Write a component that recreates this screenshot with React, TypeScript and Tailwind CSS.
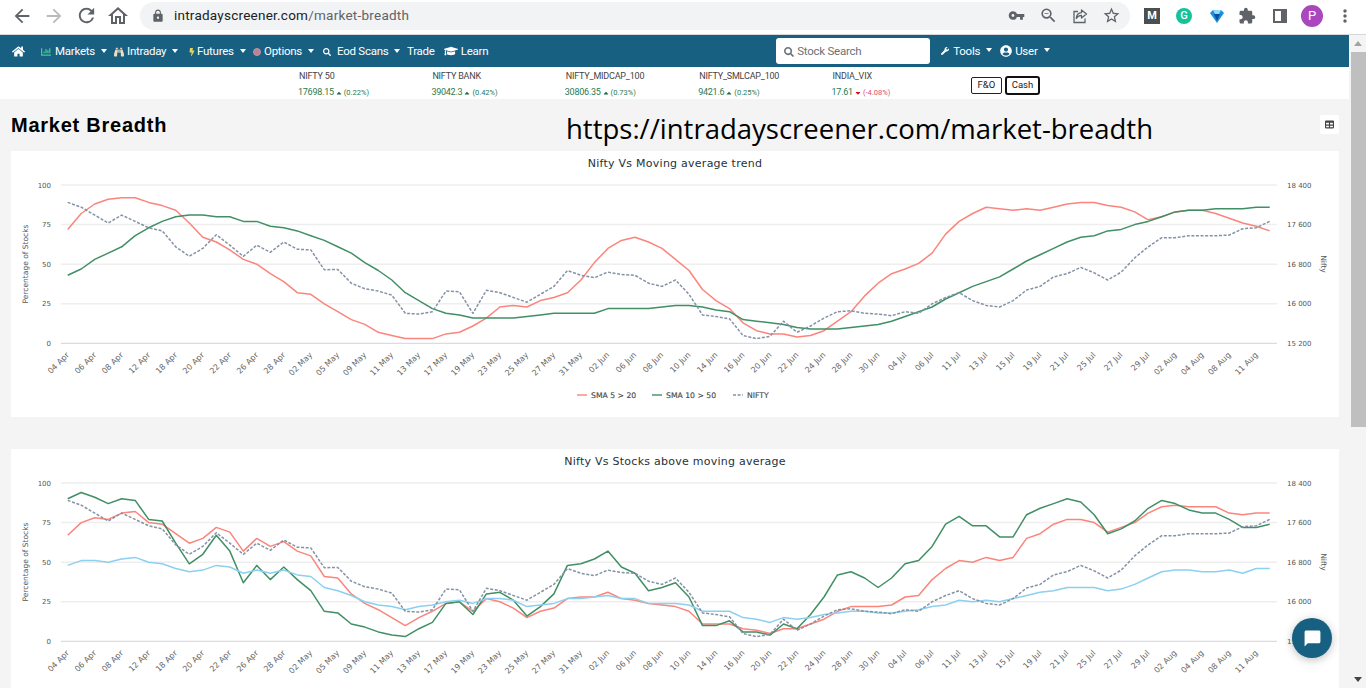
import {
  FaBinoculars,
  FaBolt,
  FaCaretDown,
  FaCaretUp,
  FaChartBar,
  FaGraduationCap,
  FaHome,
  FaSearch,
  FaTable,
  FaUserCircle,
  FaWrench,
} from "react-icons/fa";
import {
  MdArrowBack,
  MdArrowForward,
  MdChatBubble,
  MdExtension,
  MdLock,
  MdMoreVert,
  MdOutlineHome,
  MdRefresh,
  MdStarBorder,
  MdVpnKey,
  MdZoomOut,
} from "react-icons/md";

const DATES = "04 Apr,06 Apr,08 Apr,12 Apr,18 Apr,20 Apr,22 Apr,26 Apr,28 Apr,02 May,05 May,09 May,11 May,13 May,17 May,19 May,23 May,25 May,27 May,31 May,02 Jun,06 Jun,08 Jun,10 Jun,14 Jun,16 Jun,20 Jun,22 Jun,24 Jun,28 Jun,30 Jun,04 Jul,06 Jul,11 Jul,13 Jul,15 Jul,19 Jul,21 Jul,25 Jul,27 Jul,29 Jul,02 Aug,04 Aug,08 Aug,11 Aug".split(",");

const NIFTY = [89, 86, 81, 76, 81, 77, 73, 71, 61, 55, 60, 68.6, 62, 55, 62, 57.5, 64, 59.5, 59, 46.5, 46.7, 38, 34.5, 33, 30.5, 19, 18.5, 20, 33, 32.6, 19, 33.5, 32, 29, 26, 31, 36, 46, 43, 41.5, 45, 43.5, 43, 38, 36, 40, 31, 18, 17, 15.5, 5, 3, 4.5, 14, 7, 11, 16, 20, 20.6, 19, 18.5, 17.5, 20, 19, 25, 29, 32, 27, 24, 23, 27, 33.7, 36, 42, 44, 48, 44.6, 40, 45, 54, 61, 66.7, 66.7, 68, 68, 68, 68.4, 72.4, 73, 77];
const SMA_5_20 = [72, 82, 88, 91, 92, 92, 89, 87, 84, 76, 67, 64, 59, 53, 50, 44, 39, 32, 31, 25, 20, 15, 12, 7, 5, 3, 3, 3, 6, 7, 11, 16, 23, 24, 23, 27, 29, 32, 40, 51, 60, 65, 67, 64, 60, 53, 46, 34, 27, 22, 13, 8, 6, 6, 4, 5, 8, 14, 20, 30, 38, 44, 47, 50.5, 57, 69, 77, 82, 86, 85, 84, 85, 84, 86, 88, 89, 89, 87, 86, 83, 78, 80, 83, 84, 84, 82, 79, 76, 74, 71];
const SMA_10_50 = [43, 47, 53, 57, 61, 68, 73, 77, 80, 81, 81, 80, 80, 77, 77, 74, 73, 71, 68, 65, 61, 57, 51, 46, 40, 32, 27, 22, 19, 18, 16, 16, 16, 16, 17, 18, 19, 19, 19, 19, 22, 22, 22, 22, 23, 24, 24, 23, 21, 20, 15, 14, 13, 12, 10, 9, 9, 9, 10, 11, 12, 14, 17, 20, 23, 28, 32, 36, 39, 42, 47, 52, 56, 60, 64, 67, 68, 71, 72, 75, 77, 80, 83, 84, 84, 85, 85, 85, 86, 86];
const ABOVE_GREEN = [90, 94, 91, 87, 90, 89, 77, 76, 62, 49, 55, 67, 57, 37, 48, 39, 47, 39, 32, 19, 18, 11, 9, 6, 4, 3, 8, 12, 24, 25, 17, 30, 31, 26, 16, 22, 30, 48, 49, 52, 57, 47, 43, 32, 34, 37, 28, 10, 10, 13, 6, 6, 4, 11, 8, 17, 28, 42, 44, 40, 34, 40, 49, 51, 60, 74, 79, 73, 73, 66, 66, 80, 84, 87, 90, 88, 80, 68, 71, 76, 84, 89, 87, 83, 81, 81, 77, 72, 72, 74];
const ABOVE_RED = [67, 75, 78, 77, 81, 82, 75, 74, 68, 62, 65, 72, 69, 57, 65, 60, 63, 57, 54, 41, 40, 30, 24, 20, 15, 10, 15, 19, 24, 25, 19, 27, 25, 21, 15, 19, 21, 27, 28, 28, 31, 27, 26, 24, 23, 22, 19, 11, 11, 11, 8, 7, 5, 8, 8, 11, 14, 19, 22, 22, 22, 23, 28, 29, 39, 46, 51, 50, 53, 51, 53, 65, 68, 74, 77, 77, 75, 69, 72, 75, 81, 85, 86, 85, 85, 85, 81, 80, 81, 81];
const ABOVE_BLUE = [48, 51, 51, 50, 52, 53, 50, 49, 46, 44, 45, 48, 47, 43, 45, 43, 45, 42, 41, 34, 32, 29, 25, 23, 22, 20, 22, 23, 25, 26, 24, 27, 27, 26, 22, 23, 24, 27, 27, 28, 29, 27, 27, 24, 24, 24, 23, 19, 19, 19, 15, 14, 12, 15, 14, 15, 17, 18, 19, 19, 18, 18, 19, 20, 22, 23, 26, 25, 26, 25, 27, 29, 31, 32, 34, 34, 34, 32, 33, 36, 40, 44, 45, 45, 44, 44, 45, 43, 46, 46];

const RED = "#fb857c";
const GREEN = "#408f65";
const GREY = "#8492a6";
const BLUE = "#8bd0f0";

type Series = { name: string; data: number[]; color: string; dashed?: boolean; legend?: boolean };

const axisX = (i: number) => 56.7 + i * 13.506;
const axisY = (v: number) => 168.4 - v * 1.584;

function Chart({ title, series }: { title: string; series: Series[] }) {
  let legendX = 566;
  return (
    <div className="ml-[11px] mr-[10px] h-[266px] bg-white">
      <div className="flex h-[24px] items-center justify-center pt-[2px] text-[11px] tracking-[0.25px] text-[#263238] [font-family:'DejaVu_Sans',sans-serif]">
        {title}
      </div>
      <svg width="1328" height="242" className="block" fontFamily="'DejaVu Sans', sans-serif">
        {[100, 75, 50, 25].map((v) => (
          <line key={v} x1="50" x2="1266" y1={axisY(v)} y2={axisY(v)} stroke="#eeeeee" strokeWidth="1.5" />
        ))}
        <line x1="50" x2="1266" y1={axisY(0)} y2={axisY(0)} stroke="#d9dbe6" strokeWidth="1.3" />
        {[100, 75, 50, 25, 0].map((v) => (
          <text key={v} x="40" y={axisY(v) + 2.5} textAnchor="end" fontSize="7" fill="#555">
            {v}
          </text>
        ))}
        {["18 400", "17 600", "16 800", "16 000", "15 200"].map((v, i) => (
          <text key={v} x="1276" y={axisY(100 - i * 25) + 2.5} fontSize="7" fill="#555">
            {v}
          </text>
        ))}
        <text transform="translate(17 89) rotate(-90)" textAnchor="middle" fontSize="7.5" fill="#555">
          Percentage of Stocks
        </text>
        <text transform="translate(1310 89) rotate(90)" textAnchor="middle" fontSize="7.5" fill="#555">
          Nifty
        </text>
        {DATES.map((d, i) => (
          <text
            key={d}
            transform={`translate(${axisX(i * 2) + 2} 180.5) rotate(-45)`}
            textAnchor="end"
            fontSize="8"
            fill="#666"
          >
            {d}
          </text>
        ))}
        {series.map((s) => (
          <polyline
            key={s.name}
            points={s.data.map((v, i) => `${axisX(i).toFixed(1)},${axisY(v).toFixed(1)}`).join(" ")}
            fill="none"
            stroke={s.color}
            strokeWidth="1.5"
            strokeLinejoin="round"
            strokeDasharray={s.dashed ? "3 1.6" : undefined}
          />
        ))}
        {series
          .filter((s) => s.legend)
          .map((s) => {
            const x = legendX;
            legendX += s.name.length * 6 + 15;
            return (
              <g key={s.name}>
                <line x1={x} x2={x + 10} y1="220" y2="220" stroke={s.color} strokeWidth="1.4" strokeDasharray={s.dashed ? "3 1.6" : undefined} />
                <text x={x + 14} y="223" fontSize="7.7" fontWeight="500" stroke="#555" strokeWidth="0.15" fill="#444">
                  {s.name}
                </text>
              </g>
            );
          })}
      </svg>
    </div>
  );
}

function Caret() {
  return <span className="ml-[6px] mt-[-2px] h-0 w-0 border-x-[3.5px] border-t-[4px] border-x-transparent border-t-white" />;
}

function ShareIcon() {
  return (
    <svg width="16" height="16" viewBox="0 0 16 16" fill="none" stroke="#5f6368" strokeWidth="1.3">
      <path d="M6 3.5H2v11h11v-4" />
      <path d="M9.5 2v2.6C6 4.8 4.5 7 4.3 10.5 5.8 8.2 7.3 7.4 9.5 7.4V10l5-4z" strokeLinejoin="round" />
    </svg>
  );
}

function BrowserBar() {
  return (
    <div className="flex h-[35px] items-center border-b border-[#d6d8da] bg-white pb-[3px] text-[#5f6368] [font-family:Roboto,sans-serif]">
      <div className="flex w-[140px] items-center pl-[11px]">
        <MdArrowBack size={22} />
        <MdArrowForward size={22} className="ml-[10px] text-[#b8babc]" />
        <MdRefresh size={23} className="ml-[10px]" />
        <MdOutlineHome size={24} className="ml-[8px]" />
      </div>
      <div className="flex h-[28px] w-[990px] items-center rounded-full bg-[#f1f3f4] pl-[11px]">
        <MdLock size={14} />
        <span className="ml-[9px] text-[13.5px] tracking-[0.24px] text-[#202124]">intradayscreener.com</span>
        <span className="text-[13.5px] tracking-[0.24px]">/market-breadth</span>
        <div className="ml-auto flex items-center pr-[9px]">
          <MdVpnKey size={17} />
          <MdZoomOut size={19} className="ml-[14px]" />
          <span className="ml-[14px]"><ShareIcon /></span>
          <MdStarBorder size={19} className="ml-[14px]" />
        </div>
      </div>
      <div className="flex flex-1 items-center">
        <span className="ml-[14px] flex h-[16px] w-[16px] items-center justify-center bg-[#4a5050] text-[11px] font-bold leading-none text-white">M</span>
        <span className="ml-[16px] flex h-[16px] w-[16px] items-center justify-center rounded-full bg-[#15c39a] text-[11px] font-medium leading-none text-white">G</span>
        <svg width="16" height="16" viewBox="0 0 16 16" className="ml-[17px]">
          <path d="M1 5l3-3h8l3 3-7 10z" fill="#1b8fe0" />
          <path d="M5 6h6l-3 7z" fill="#0b4f9c" />
          <path d="M4 2h8l-2 4H6z" fill="#8fdcff" />
        </svg>
        <MdExtension size={18} className="ml-[13px]" />
        <span className="ml-[17px] flex h-[14px] w-[14px] justify-end border-[2px] border-[#5f6368] bg-white">
          <span className="w-[4px] bg-[#5f6368]" />
        </span>
        <span className="ml-[14px] flex h-[22px] w-[22px] items-center justify-center rounded-full bg-[#ab47bc] text-[13px] text-white">P</span>
        <MdMoreVert size={20} className="ml-[12px]" />
      </div>
    </div>
  );
}

function Nav() {
  const items = [
    { label: "Markets", icon: <FaChartBar size={10} className="text-[#45c891]" />, w: "w-[73px]", gap: "ml-[4px]" },
    { label: "Intraday", icon: <FaBinoculars size={10} className="text-[#f1dcc0]" />, w: "w-[74px]", gap: "ml-[3px]" },
    { label: "Futures", icon: <FaBolt size={8} className="text-[#e7d45f]" />, w: "w-[65px]", gap: "ml-[1px]" },
    { label: "Options", icon: <span className="h-[8px] w-[8px] rounded-full border border-[#c98f9c] bg-[#b98595]" />, w: "w-[70px]", gap: "ml-[3px]" },
    { label: "Eod Scans", icon: <FaSearch size={8} className="text-white" />, w: "w-[84px]", gap: "ml-[6px]" },
  ];
  return (
    <div className="flex h-[32px] items-center bg-[#186082] text-[11.5px] tracking-[-0.25px] text-white [font-family:Roboto,sans-serif]">
      <FaHome size={13} className="ml-[12px] mr-[16px]" />
      {items.map((item) => (
        <span key={item.label} className={`flex items-center pt-[1px] ${item.w}`}>
          {item.icon}
          <span className={item.gap}>{item.label}</span>
          <Caret />
        </span>
      ))}
      <span className="pt-[1px]">Trade</span>
      <FaGraduationCap size={14} className="ml-[9px]" />
      <span className="ml-[3px] pt-[1px]">Learn</span>
      <div className="ml-[288px] flex h-[26px] w-[154px] items-center rounded-[3px] bg-white pl-[8px] pt-[1px] text-[#6b7178]">
        <FaSearch size={10} />
        <span className="ml-[3px]">Stock Search</span>
      </div>
      <FaWrench size={8} className="ml-[11px]" />
      <span className="ml-[4px] pt-[1px]">Tools</span>
      <Caret />
      <FaUserCircle size={12} className="ml-[8px]" />
      <span className="ml-[3px] pt-[1px]">User</span>
      <Caret />
    </div>
  );
}

function Ticker({ name, value, change, down }: { name: string; value: string; change: string; down?: boolean }) {
  return (
    <div className="w-[133.4px] [font-family:Roboto,sans-serif]">
      <div className="h-[18px] pl-[1px] text-[9px] leading-[16px] tracking-[-0.2px] text-[#444]">{name}</div>
      <div className="flex items-center text-[9px] tracking-[-0.25px] text-[#2c7a4f]">
        {value}
        {down ? <FaCaretDown size={8} className="ml-[1px] text-[#c8102e]" /> : <FaCaretUp size={8} className="ml-[1px] text-[#1f6b45]" />}
        <span className={`ml-[1px] text-[7.5px] tracking-normal ${down ? "text-[#d9506a]" : "text-[#2c7a4f]"}`}>{change}</span>
      </div>
    </div>
  );
}

export default function App() {
  const sma: Series[] = [
    { name: "SMA 5 > 20", data: SMA_5_20, color: RED, legend: true },
    { name: "SMA 10 > 50", data: SMA_10_50, color: GREEN, legend: true },
    { name: "NIFTY", data: NIFTY, color: GREY, dashed: true, legend: true },
  ];
  // second chart's legend sits below the fold
  const above: Series[] = [
    { name: "red", data: ABOVE_RED, color: RED },
    { name: "green", data: ABOVE_GREEN, color: GREEN },
    { name: "blue", data: ABOVE_BLUE, color: BLUE },
    { name: "nifty", data: NIFTY, color: GREY, dashed: true },
  ];

  return (
    <div className="relative h-[688px] w-[1366px] overflow-hidden bg-white">
      <BrowserBar />
      <div className="flex h-[653px]">
        <div className="h-full w-[1349px] overflow-hidden bg-[#f4f4f4]">
          <Nav />
          <div className="flex h-[32px] items-start bg-white pl-[298px] pt-[1px]">
            <Ticker name="NIFTY 50" value="17698.15" change="(0.22%)" />
            <Ticker name="NIFTY BANK" value="39042.3" change="(0.42%)" />
            <Ticker name="NIFTY_MIDCAP_100" value="30806.35" change="(0.73%)" />
            <Ticker name="NIFTY_SMLCAP_100" value="9421.6" change="(0.25%)" />
            <Ticker name="INDIA_VIX" value="17.61" change="(-4.08%)" down />
            <div className="ml-[6px] mt-[8px] flex items-center text-[9.5px] text-[#222] [font-family:Roboto,sans-serif]">
              <span className="flex h-[17px] w-[31px] items-center justify-center rounded-[2px] border border-[#222]">F&amp;O</span>
              <span className="ml-[3px] flex h-[19px] w-[35px] items-center justify-center rounded-[3px] border-2 border-[#111]">Cash</span>
            </div>
          </div>
          <div className="flex h-[52px] items-start">
            <h1 className="ml-[11px] mt-[13px] w-[555px] text-[20px] font-bold leading-[26px] tracking-[0.75px] text-black [font-family:'Liberation_Sans',sans-serif]">
              Market Breadth
            </h1>
            <span className="mt-[10px] text-[27.5px] leading-[40px] text-black [font-family:'Open_Sans',sans-serif]">
              https://intradayscreener.com/market-breadth
            </span>
            <span className="ml-auto mr-[10px] mt-[16px] flex h-[19px] w-[19px] items-center justify-center rounded-[2px] bg-white">
              <FaTable size={9} className="text-[#444]" />
            </span>
          </div>
          <Chart title="Nifty Vs Moving average trend" series={sma} />
          <div className="h-[32px]" />
          <Chart title="Nifty Vs Stocks above moving average" series={above} />
        </div>
        <div className="flex w-[17px] flex-col bg-[#f4f4f4]">
          <div className="flex h-[17px] items-center justify-center">
            <span className="h-0 w-0 border-x-[4px] border-b-[5px] border-x-transparent border-b-[#a3a3a3]" />
          </div>
          <div className="ml-[2px] h-[375px] bg-[#bfbfbf]" />
          <div className="flex-1" />
          <div className="flex h-[17px] items-center justify-center">
            <span className="h-0 w-0 border-x-[4px] border-t-[5px] border-x-transparent border-t-[#444]" />
          </div>
        </div>
      </div>
      <button className="absolute left-[1292px] top-[618px] flex h-[40px] w-[40px] items-center justify-center rounded-full bg-[#186082] text-white shadow-[0_2px_8px_rgba(0,0,0,0.25)]">
        <MdChatBubble size={19} />
      </button>
    </div>
  );
}
